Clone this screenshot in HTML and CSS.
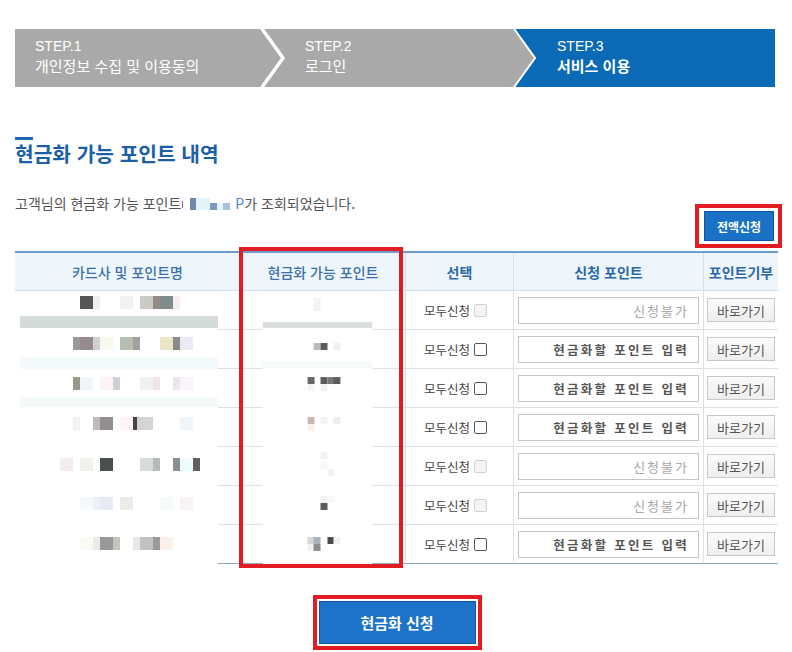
FILE: index.html
```html
<!DOCTYPE html>
<html lang="ko">
<head>
<meta charset="utf-8">
<title>현금화 가능 포인트 내역</title>
<link rel="stylesheet" href="styles.css">
</head>
<body>
<div class="page">
  <div class="steps">
    <div class="step s1">
      <span class="st">STEP.1</span>
      <span class="sn">개인정보 수집 및 이용동의</span>
      <svg class="chev chev1" width="28" height="58" viewBox="0 0 28 58"><polyline points="2,-3 25,29 2,61" fill="none" stroke="#fff" stroke-width="3.5"/></svg>
    </div>
    <div class="step s2">
      <span class="st">STEP.2</span>
      <span class="sn">로그인</span>
      <svg class="chev chev2" width="28" height="58" viewBox="0 0 28 58"><polyline points="1,-3 24,29 1,61" fill="none" stroke="#fff" stroke-width="2"/></svg>
    </div>
    <div class="step s3">
      <span class="st">STEP.3</span>
      <strong class="sn">서비스 이용</strong>
    </div>
  </div>

  <div class="bar"></div>
  <h2 class="title">현금화 가능 포인트 내역</h2>

  <div class="info">
    <p class="msg">고객님의 현금화 가능 포인트<svg class="blur" width="54" height="14" viewBox="0 0 54 14"><rect x="1" y="4" width="1" height="7" fill="#777"/><rect x="9" y="1" width="6" height="12" fill="#6f88b0"/><rect x="15" y="1" width="14" height="12" fill="#e2f3fa"/><rect x="29" y="6" width="7" height="7" fill="#7b99bd"/><rect x="36" y="6" width="6" height="7" fill="#e8f5fb"/><rect x="42" y="6" width="7" height="7" fill="#a9c3d9"/></svg><span class="pt">P</span>가 조회되었습니다.</p>
    <div class="redbox rb-small"><button class="btn-all">전액신청</button></div>
  </div>

  <div class="tbl">
    <div class="tr thead">
      <div class="th c1 lite">카드사 및 포인트명</div>
      <div class="th c2 lite">현금화 가능 포인트</div>
      <div class="th c3">선택</div>
      <div class="th c4">신청 포인트</div>
      <div class="th c5">포인트기부</div>
    </div>

    <div class="tr">
      <div class="td c1"><svg width="225" height="39" viewBox="0 0 225 39"><rect x="65" y="5" width="13" height="13" fill="#555"/><rect x="78" y="5" width="7" height="13" fill="#f2eeee"/><rect x="105" y="5" width="13" height="13" fill="#f3f1f1"/><rect x="125" y="5" width="13" height="13" fill="#cbcac5"/><rect x="138" y="5" width="7" height="13" fill="#938b88"/><rect x="145" y="5" width="13" height="13" fill="#7f8c8b"/><rect x="158" y="5" width="7" height="13" fill="#f6eeee"/><rect x="5" y="25" width="198" height="12" fill="#d4dbd9"/><rect x="203" y="38" width="22" height="1" fill="#d9e0e6"/></svg></div>
      <div class="td c2"><svg width="165" height="39" viewBox="0 0 165 39"><rect x="73" y="7" width="7" height="13" fill="#f3f3f3"/><rect x="22" y="31" width="110" height="6" fill="#dadedd"/><rect x="0" y="38" width="22" height="1" fill="#d9e0e6"/><rect x="132" y="38" width="33" height="1" fill="#d9e0e6"/></svg></div>
      <div class="td c3">모두신청<span class="chk off"></span></div>
      <div class="td c4"><span class="inp off">신청불가</span></div>
      <div class="td c5"><button class="btn-go">바로가기</button></div>
    </div>

    <div class="tr">
      <div class="td c1"><svg width="225" height="39" viewBox="0 0 225 39"><rect x="58" y="7" width="7" height="13" fill="#9a9a9a"/><rect x="65" y="7" width="13" height="13" fill="#948a8f"/><rect x="78" y="7" width="7" height="13" fill="#d0d0d0"/><rect x="85" y="7" width="13" height="13" fill="#f8f8ee"/><rect x="105" y="7" width="13" height="13" fill="#b7bfb0"/><rect x="118" y="7" width="7" height="13" fill="#a0a0a0"/><rect x="145" y="7" width="13" height="13" fill="#eee4c8"/><rect x="158" y="7" width="7" height="13" fill="#8a8a8a"/><rect x="165" y="7" width="13" height="13" fill="#ece8f4"/><rect x="5" y="27" width="198" height="12" fill="#f4fafb"/><rect x="203" y="38" width="22" height="1" fill="#d9e0e6"/></svg></div>
      <div class="td c2"><svg width="165" height="39" viewBox="0 0 165 39"><rect x="73" y="13" width="7" height="7" fill="#bcbcbc"/><rect x="80" y="13" width="7" height="7" fill="#5c5c5c"/><rect x="93" y="13" width="7" height="7" fill="#f0f0f0"/><rect x="22" y="31" width="110" height="7" fill="#f6fafa"/><rect x="0" y="38" width="22" height="1" fill="#d9e0e6"/><rect x="132" y="38" width="33" height="1" fill="#d9e0e6"/></svg></div>
      <div class="td c3">모두신청<span class="chk"></span></div>
      <div class="td c4"><span class="inp">현금화할 포인트 입력</span></div>
      <div class="td c5"><button class="btn-go">바로가기</button></div>
    </div>

    <div class="tr">
      <div class="td c1"><svg width="225" height="39" viewBox="0 0 225 39"><rect x="58" y="8" width="7" height="13" fill="#9a9888"/><rect x="65" y="8" width="13" height="13" fill="#eef6fb"/><rect x="85" y="8" width="13" height="13" fill="#fdf3f5"/><rect x="98" y="8" width="7" height="13" fill="#d2d0d6"/><rect x="125" y="8" width="13" height="13" fill="#f2f0f2"/><rect x="138" y="8" width="7" height="13" fill="#efe4ea"/><rect x="158" y="8" width="7" height="13" fill="#e8e8ee"/><rect x="165" y="8" width="13" height="13" fill="#fbf3fb"/><rect x="5" y="28" width="198" height="10" fill="#f4fafa"/><rect x="203" y="38" width="22" height="1" fill="#d9e0e6"/></svg></div>
      <div class="td c2"><svg width="165" height="39" viewBox="0 0 165 39"><rect x="67" y="8" width="7" height="7" fill="#6a6662"/><rect x="80" y="8" width="7" height="7" fill="#5c5c5c"/><rect x="87" y="8" width="7" height="7" fill="#7a7676"/><rect x="93" y="8" width="7" height="7" fill="#5c5c5c"/><rect x="67" y="15" width="7" height="7" fill="#f8f4f2"/><rect x="80" y="15" width="7" height="7" fill="#f2f2f2"/><rect x="0" y="38" width="22" height="1" fill="#d9e0e6"/><rect x="132" y="38" width="33" height="1" fill="#d9e0e6"/></svg></div>
      <div class="td c3">모두신청<span class="chk"></span></div>
      <div class="td c4"><span class="inp">현금화할 포인트 입력</span></div>
      <div class="td c5"><button class="btn-go">바로가기</button></div>
    </div>

    <div class="tr">
      <div class="td c1"><svg width="225" height="39" viewBox="0 0 225 39"><rect x="58" y="9" width="7" height="13" fill="#f2f2ee"/><rect x="78" y="9" width="7" height="13" fill="#c0bcba"/><rect x="85" y="9" width="13" height="13" fill="#928e92"/><rect x="105" y="9" width="13" height="13" fill="#fdf3f8"/><rect x="118" y="9" width="4" height="13" fill="#444"/><rect x="122" y="9" width="16" height="13" fill="#d3d3d8"/><rect x="165" y="9" width="13" height="13" fill="#eef6fb"/><rect x="203" y="38" width="22" height="1" fill="#d9e0e6"/></svg></div>
      <div class="td c2"><svg width="165" height="39" viewBox="0 0 165 39"><rect x="67" y="9" width="7" height="7" fill="#c8b8b0"/><rect x="80" y="9" width="7" height="7" fill="#f0f4f2"/><rect x="93" y="9" width="7" height="7" fill="#eeeeee"/><rect x="67" y="16" width="7" height="7" fill="#fbf0ea"/><rect x="0" y="38" width="22" height="1" fill="#d9e0e6"/><rect x="132" y="38" width="33" height="1" fill="#d9e0e6"/></svg></div>
      <div class="td c3">모두신청<span class="chk"></span></div>
      <div class="td c4"><span class="inp">현금화할 포인트 입력</span></div>
      <div class="td c5"><button class="btn-go">바로가기</button></div>
    </div>

    <div class="tr">
      <div class="td c1"><svg width="225" height="39" viewBox="0 0 225 39"><rect x="45" y="11" width="13" height="13" fill="#f3eeec"/><rect x="65" y="11" width="13" height="13" fill="#f0f0ec"/><rect x="85" y="11" width="13" height="13" fill="#4a4f4d"/><rect x="125" y="11" width="13" height="13" fill="#d6dbd9"/><rect x="138" y="11" width="7" height="13" fill="#b8bab9"/><rect x="158" y="11" width="7" height="13" fill="#8a8f92"/><rect x="165" y="11" width="13" height="13" fill="#eefbfb"/><rect x="178" y="11" width="7" height="13" fill="#5f6260"/><rect x="203" y="38" width="22" height="1" fill="#d9e0e6"/></svg></div>
      <div class="td c2"><svg width="165" height="39" viewBox="0 0 165 39"><rect x="80" y="5" width="7" height="7" fill="#f2f2f2"/><rect x="80" y="15" width="7" height="7" fill="#f4f8f8"/><rect x="87" y="22" width="7" height="7" fill="#f2f2f2"/><rect x="0" y="38" width="22" height="1" fill="#d9e0e6"/><rect x="132" y="38" width="33" height="1" fill="#d9e0e6"/></svg></div>
      <div class="td c3">모두신청<span class="chk off"></span></div>
      <div class="td c4"><span class="inp off">신청불가</span></div>
      <div class="td c5"><button class="btn-go">바로가기</button></div>
    </div>

    <div class="tr">
      <div class="td c1"><svg width="225" height="39" viewBox="0 0 225 39"><rect x="65" y="11" width="13" height="13" fill="#f5f9fb"/><rect x="78" y="11" width="7" height="13" fill="#eef0f6"/><rect x="85" y="11" width="13" height="13" fill="#e4ebf4"/><rect x="105" y="11" width="13" height="13" fill="#ebece5"/><rect x="145" y="11" width="13" height="13" fill="#f3fbfb"/><rect x="165" y="11" width="13" height="13" fill="#f8f4f6"/><rect x="203" y="38" width="22" height="1" fill="#d9e0e6"/></svg></div>
      <div class="td c2"><svg width="165" height="39" viewBox="0 0 165 39"><rect x="80" y="10" width="7" height="7" fill="#f2f2f2"/><rect x="87" y="10" width="7" height="7" fill="#f4f8f8"/><rect x="80" y="17" width="7" height="7" fill="#605a5c"/><rect x="0" y="38" width="22" height="1" fill="#d9e0e6"/><rect x="132" y="38" width="33" height="1" fill="#d9e0e6"/></svg></div>
      <div class="td c3">모두신청<span class="chk off"></span></div>
      <div class="td c4"><span class="inp off">신청불가</span></div>
      <div class="td c5"><button class="btn-go">바로가기</button></div>
    </div>

    <div class="tr last">
      <div class="td c1"><svg width="225" height="39" viewBox="0 0 225 39"><rect x="65" y="12" width="13" height="13" fill="#fbfbf3"/><rect x="78" y="12" width="7" height="13" fill="#ecece6"/><rect x="85" y="12" width="13" height="13" fill="#999999"/><rect x="98" y="12" width="7" height="13" fill="#c0c6be"/><rect x="118" y="12" width="7" height="13" fill="#e9e6e4"/><rect x="125" y="12" width="13" height="13" fill="#c2c2c2"/><rect x="138" y="12" width="7" height="13" fill="#9a9a9a"/><rect x="145" y="12" width="13" height="13" fill="#fcf0ea"/><rect x="203" y="38" width="22" height="1" fill="#88a6c0"/></svg></div>
      <div class="td c2"><svg width="165" height="39" viewBox="0 0 165 39"><rect x="67" y="12" width="7" height="7" fill="#d6d6d6"/><rect x="73" y="12" width="7" height="7" fill="#a8b4bc"/><rect x="87" y="12" width="7" height="7" fill="#4a4a4a"/><rect x="93" y="12" width="7" height="7" fill="#f0f0f0"/><rect x="67" y="19" width="7" height="7" fill="#f2f2f2"/><rect x="73" y="19" width="7" height="7" fill="#8e8e8e"/><rect x="0" y="38" width="22" height="1" fill="#88a6c0"/><rect x="132" y="38" width="33" height="1" fill="#88a6c0"/></svg></div>
      <div class="td c3">모두신청<span class="chk"></span></div>
      <div class="td c4"><span class="inp">현금화할 포인트 입력</span></div>
      <div class="td c5"><button class="btn-go">바로가기</button></div>
    </div>

    <div class="redbox col-mark"></div>
  </div>

  <div class="submit">
    <div class="redbox rb-big"><button class="btn-submit">현금화 신청</button></div>
  </div>
</div>
</body>
</html>
```

FILE: styles.css
```css
* { box-sizing: border-box; }

body {
  margin: 0;
  background: #fff;
  font-family: "Noto Sans CJK KR", "Noto Sans", sans-serif;
  color: #444;
}

.page {
  width: 792px;
  padding: 29px 14px 0 15px;
}

/* steps */
.steps {
  display: flex;
  width: 760px;
  height: 58px;
  background: #a9a9a9;
}
.step {
  position: relative;
  display: flex;
  flex-direction: column;
  justify-content: center;
  padding-bottom: 4px;
  color: #fff;
  font-size: 15px;
  line-height: 19px;
}
.s1 { width: 245px; padding-left: 20px; }
.s2 { width: 253px; padding-left: 45px; }
.s3 {
  flex: 1;
  padding-left: 44px;
  background: #0a6ab6;
  clip-path: polygon(0 0, 100% 0, 100% 100%, 0 100%, 23px 50%);
}
.st, .sn { display: block; }
.st {
  font-family: "Liberation Sans", Arial, sans-serif;
  font-size: 14px;
}
.s3 .sn { font-weight: 700; }
.chev {
  position: absolute;
  top: 0;
  left: 100%;
  margin-left: -2px;
  z-index: 2;
}

/* title */
.bar {
  width: 18px;
  height: 3px;
  margin-top: 50px;
  background: #1b6ab4;
}
.title {
  margin: 1px 0 0;
  font-size: 20.3px;
  line-height: 25px;
  font-weight: 700;
  color: #1b5fa6;
}

/* info line */
.info {
  display: flex;
  justify-content: space-between;
  align-items: flex-start;
  margin-top: 28px;
  margin-right: -4px;
}
.msg {
  margin: 0;
  font-size: 14px;
  line-height: 18px;
  color: #555;
}
.blur {
  vertical-align: -2px;
}
.pt { color: #4f82c2; }

.redbox {
  border: 4px solid #e31b23;
}
.rb-small {
  margin-top: 10px;
  padding: 3px 4px 3px 5px;
}
.btn-all {
  display: block;
  width: 70px;
  height: 30px;
  padding: 0;
  border: 1px solid #0c5aa6;
  background: #1a72c6;
  color: #fff;
  font-family: inherit;
  font-size: 12px;
  font-weight: 700;
}

/* table */
.tbl {
  position: relative;
  margin-top: 3px;
  width: 763px;
}
.tr {
  display: grid;
  grid-template-columns: 225px 165px 108px 190px 75px;
  height: 39px;
}
.thead {
  height: 40px;
  border-top: 2px solid #6d9ccb;
  background: #eef6fc;
}
.th {
  display: flex;
  align-items: center;
  justify-content: center;
  border-bottom: 1px solid #d4e0eb;
  font-size: 14px;
  font-weight: 700;
  color: #2d68a6;
}
.th.lite { font-weight: 500; color: #3a70aa; }
.th + .th, .td + .td { border-left: 1px solid #d6e3ef; }
.td {
  display: flex;
  align-items: center;
  justify-content: center;
  height: 39px;
}
.td.c1, .td.c2 { align-items: stretch; }
.td svg { display: block; }
.td.c3, .td.c4, .td.c5 { border-bottom: 1px solid #d9e0e6; }
.last .td.c3, .last .td.c4, .last .td.c5 { border-bottom-color: #88a6c0; }

.td.c3 {
  padding-right: 8px;
  font-size: 12.5px;
  color: #444;
}
.chk {
  flex: none;
  width: 13px;
  height: 13px;
  margin-left: 4px;
  border: 1px solid #555;
  border-radius: 2px;
  background: #fff;
}
.chk.off {
  border-color: #d2d2d2;
  background: #f3f3f3;
}

.inp {
  display: block;
  width: 181px;
  height: 27px;
  padding-right: 9px;
  border: 1px solid #c6c6c6;
  background: #fff;
  text-align: right;
  font-size: 12.5px;
  line-height: 25px;
  font-weight: 700;
  letter-spacing: 2.3px;
  color: #555;
  white-space: nowrap;
}
.inp.off {
  font-weight: 400;
  font-size: 13px;
  letter-spacing: 2px;
  color: #a8a8a8;
}

.btn-go {
  width: 68px;
  height: 24px;
  padding: 0;
  border: 1px solid #c8c8c8;
  background: linear-gradient(#fbfbfb, #eeeeee);
  font-family: inherit;
  font-size: 13px;
  color: #555;
}

.col-mark {
  position: absolute;
  left: 224px;
  top: -4px;
  width: 164px;
  height: 321px;
}

/* submit */
.submit {
  display: flex;
  justify-content: center;
  margin-top: 31px;
  padding-left: 1px;
}
.rb-big {
  padding: 2px;
}
.btn-submit {
  display: block;
  width: 157px;
  height: 43px;
  padding: 0;
  border: 1px solid #0e58a4;
  background: #1c73c7;
  color: #fff;
  font-family: inherit;
  font-size: 15px;
  font-weight: 700;
}
```
